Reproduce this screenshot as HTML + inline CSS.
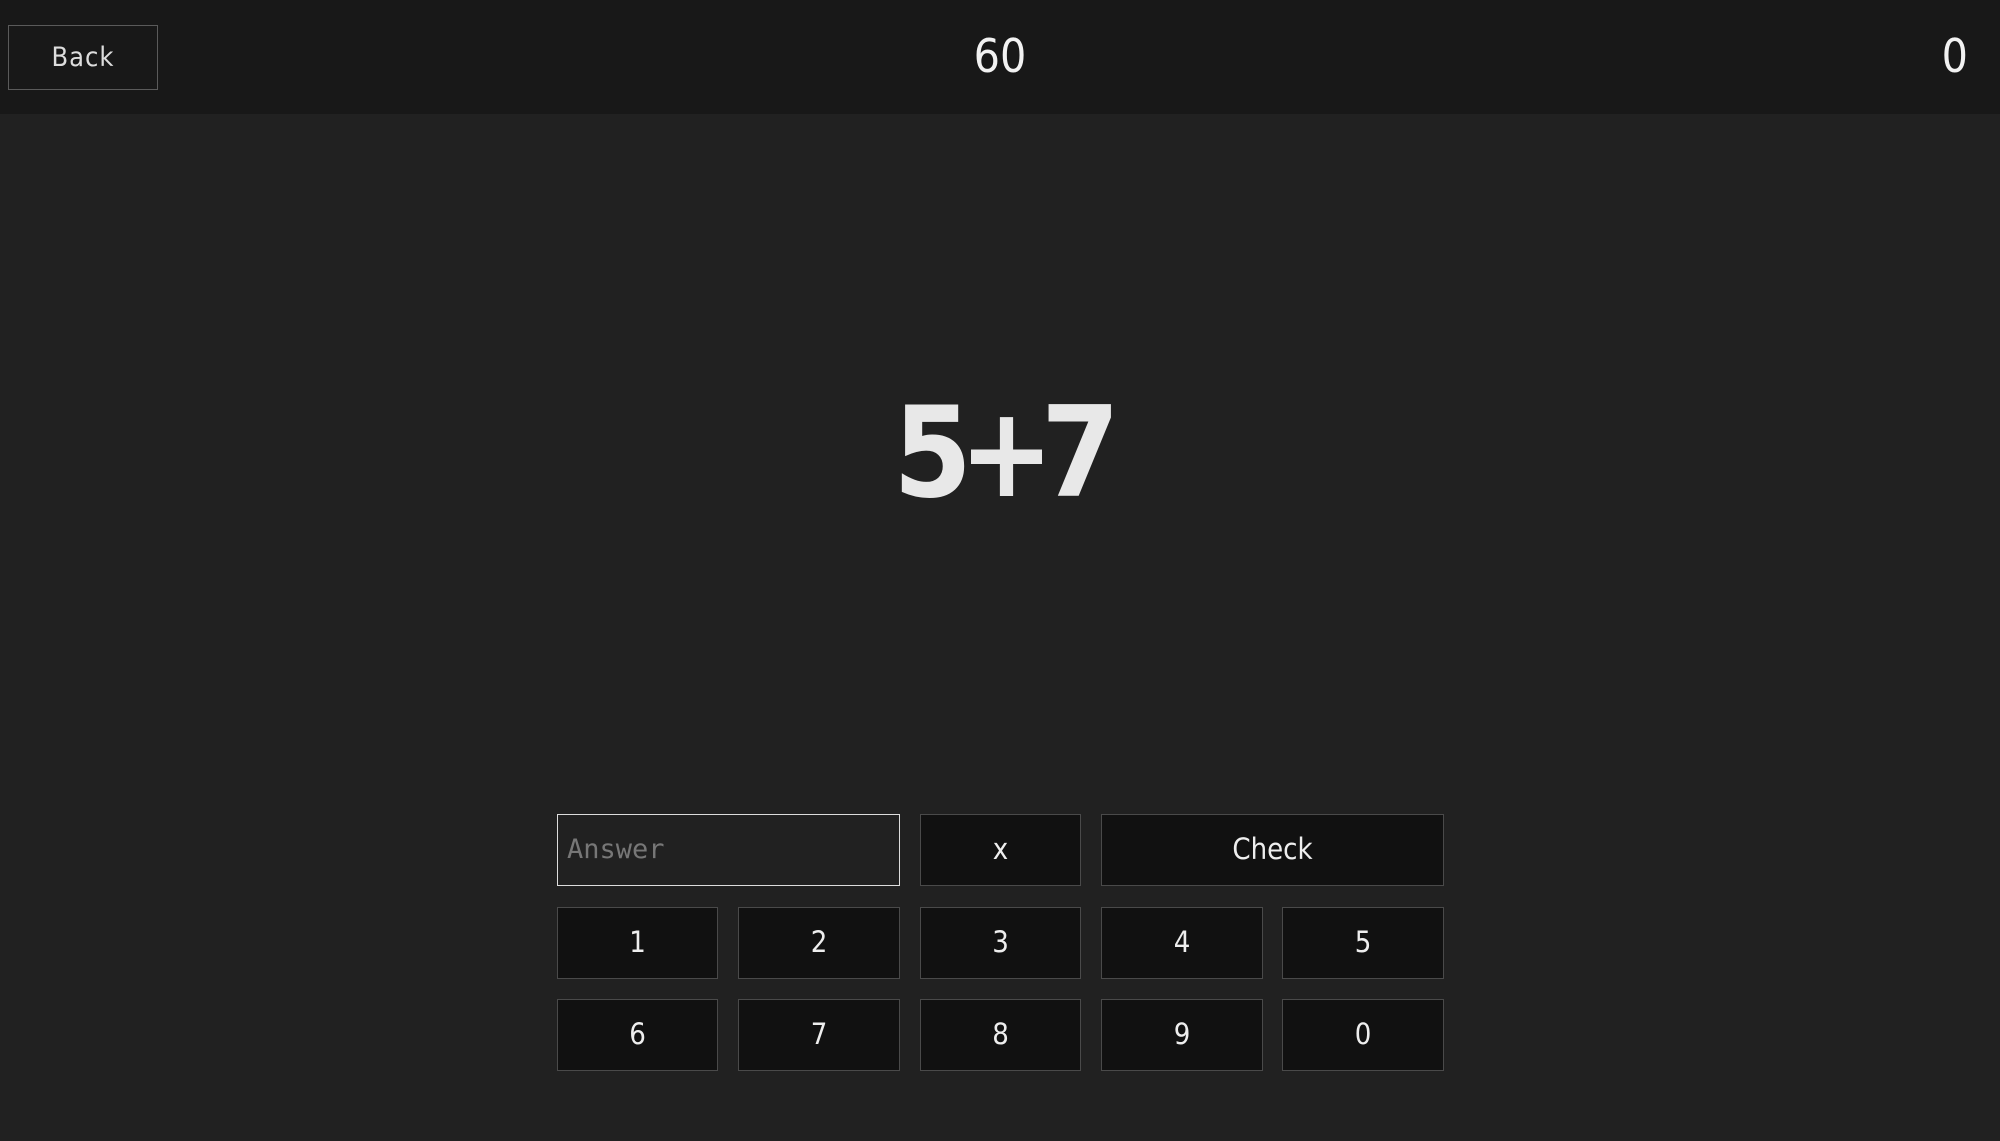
<!DOCTYPE html>
<html><head><style>
*{box-sizing:border-box;margin:0;padding:0}
body{width:2000px;height:1141px;background:#212121;font-family:"DejaVu Sans","Liberation Sans",sans-serif;color:#e6e6e6;position:relative;overflow:hidden}
.hdr{position:absolute;left:0;top:0;width:2000px;height:114px;background:#181818}
.back{position:absolute;left:8px;top:25px;width:150px;height:65px;border:1.5px solid #5a5a5a;display:flex;align-items:center;justify-content:center;font-size:27px;color:#ddd;letter-spacing:1px;font-stretch:condensed}
.t{position:absolute;top:28px;font-size:46px;line-height:56px;color:#f2f2f2;font-stretch:condensed}
.q{position:absolute;left:0;width:2000px;top:378px;text-align:center;font-size:126px;font-weight:bold;line-height:150px;color:#e8e8e8;font-stretch:condensed;letter-spacing:-13px;padding-right:0}
.b{position:absolute;background:#111;border:1.5px solid #4a4a4a;display:flex;align-items:center;justify-content:center;font-size:29px;color:#eee;font-stretch:condensed;padding-bottom:2px}
.inp{position:absolute;left:557px;top:814px;width:343px;height:72px;border:1.5px solid #ddd;background:#212121;font-family:"DejaVu Sans Mono","Liberation Mono",monospace;font-size:27px;color:#777;padding-left:9px;display:flex;align-items:center;padding-bottom:2px}
</style></head><body>
<div class="hdr"></div>
<div class="back">Back</div>
<div class="t" style="left:0;width:2000px;text-align:center">60</div>
<div class="t" style="right:32px">0</div>
<div class="q">5+7</div>
<div class="inp">Answer</div>
<div class="b" style="left:920px;top:814px;width:161px;height:72px">x</div>
<div class="b" style="left:1101px;top:814px;width:343px;height:72px">Check</div>
<div class="b" style="left:557px;top:907px;width:161px;height:72px">1</div>
<div class="b" style="left:738px;top:907px;width:162px;height:72px">2</div>
<div class="b" style="left:920px;top:907px;width:161px;height:72px">3</div>
<div class="b" style="left:1101px;top:907px;width:162px;height:72px">4</div>
<div class="b" style="left:1282px;top:907px;width:162px;height:72px">5</div>
<div class="b" style="left:557px;top:999px;width:161px;height:72px">6</div>
<div class="b" style="left:738px;top:999px;width:162px;height:72px">7</div>
<div class="b" style="left:920px;top:999px;width:161px;height:72px">8</div>
<div class="b" style="left:1101px;top:999px;width:162px;height:72px">9</div>
<div class="b" style="left:1282px;top:999px;width:162px;height:72px">0</div>
</body></html>
